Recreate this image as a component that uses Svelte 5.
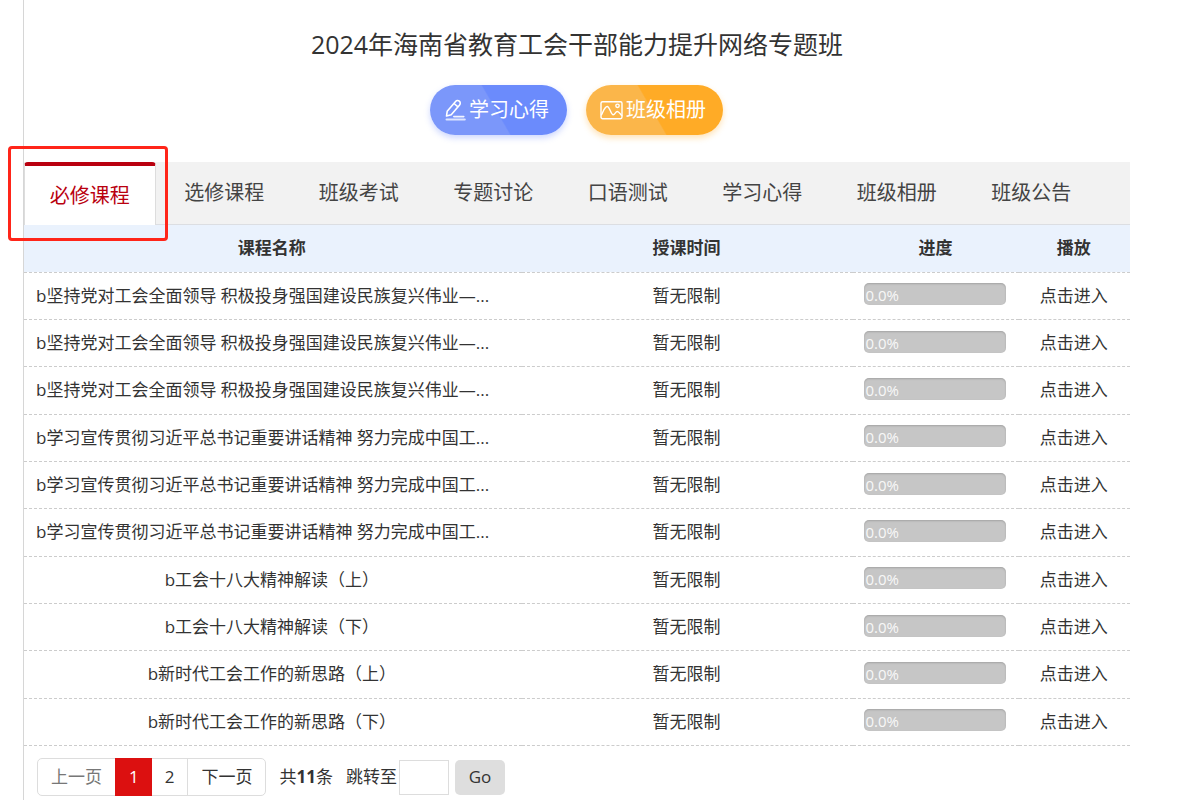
<script>
  const tabs = ['必修课程', '选修课程', '班级考试', '专题讨论', '口语测试', '学习心得', '班级相册', '班级公告'];
  let active = $state(0);
  let jump = $state('');

  const unity = 'b坚持党对工会全面领导 积极投身强国建设民族复兴伟业—...';
  const speech = 'b学习宣传贯彻习近平总书记重要讲话精神 努力完成中国工...';
  const courses = [
    { name: unity, long: true },
    { name: unity, long: true },
    { name: unity, long: true },
    { name: speech, long: true },
    { name: speech, long: true },
    { name: speech, long: true },
    { name: 'b工会十八大精神解读（上）' },
    { name: 'b工会十八大精神解读（下）' },
    { name: 'b新时代工会工作的新思路（上）' },
    { name: 'b新时代工会工作的新思路（下）' }
  ];
</script>

<main class="page">
  <header class="head">
    <h1>2024年海南省教育工会干部能力提升网络专题班</h1>
    <div class="actions">
      <button class="pill blue" type="button">
        <svg width="21" height="22" viewBox="0 0 21 22" fill="none" stroke="#fff" stroke-width="1.6" stroke-linejoin="round" stroke-linecap="round" aria-hidden="true">
          <path d="M1.500 17 2.200 12.300 10.600 2.500a2.600 2.600 0 0 1 3.700-.3 2.600 2.600 0 0 1 .3 3.700L6.200 15.700zM9 4.500l4 3.400" />
          <path d="M8.800 17.600h10" stroke-opacity=".9" />
          <path d="M1.500 20.400h18.300" stroke-width="2" stroke-opacity=".75" />
        </svg>
        <span>学习心得</span>
      </button>
      <button class="pill orange" type="button">
        <svg width="23" height="22" viewBox="0 0 23 22" fill="none" stroke="#fff" stroke-width="1.4" stroke-linejoin="round" stroke-linecap="round" aria-hidden="true">
          <rect x="1" y="2.7" width="21" height="17" rx="1.6" />
          <path d="M1.500 15.800C3.200 12.500 4.800 7.500 7.200 7.500c2.600 0 3.600 8.300 6 8.300 1.800 0 2.300-3.300 4.100-3.300 1.500 0 2.800 2.300 4.500 4.100" />
          <circle cx="17.500" cy="6.800" r="1.700" />
        </svg>
        <span>班级相册</span>
      </button>
    </div>
  </header>

  <div class="tab-wrap">
    <div class="tabs" role="tablist">
      {#each tabs as tab, i}
        <div class="slot">
          <button class="tab" class:active={active === i} type="button" role="tab" aria-selected={active === i} onclick={() => (active = i)}>{tab}</button>
        </div>
      {/each}
    </div>
    <div class="marker"></div>
  </div>

  <table>
    <thead>
      <tr>
        <th class="c-name">课程名称</th>
        <th class="c-time">授课时间</th>
        <th class="c-bar">进度</th>
        <th class="c-play">播放</th>
      </tr>
    </thead>
    <tbody>
      {#each courses as course}
        <tr>
          <td class:long={course.long}>{course.name}</td>
          <td>暂无限制</td>
          <td><div class="bar">0.0%</div></td>
          <td><a href="#play">点击进入</a></td>
        </tr>
      {/each}
    </tbody>
  </table>

  <footer class="foot">
    <nav class="pager">
      <button class="prev" type="button" disabled>上一页</button>
      <button class="current" type="button">1</button>
      <button type="button">2</button>
      <button type="button">下一页</button>
    </nav>
    <span class="total">共<b>11</b>条</span>
    <label for="jump">跳转至</label>
    <input id="jump" type="text" bind:value={jump} />
    <button class="go" type="button">Go</button>
  </footer>
</main>

<style>
  :global(body) {
    background: #fff;
  }
  * {
    box-sizing: border-box;
  }
  .page {
    margin: 0 51px 0 23px;
    border-left: 1px solid #d6d6d6;
    font: 17px/24px "Open Sans", "Noto Sans CJK SC", sans-serif;
    color: #333;
  }
  button,
  input {
    font: inherit;
    color: inherit;
    margin: 0;
  }
  button {
    border: 0;
    background: none;
    padding: 0;
    cursor: pointer;
    white-space: nowrap;
  }
  .head {
    padding-top: 26px;
  }
  h1 {
    margin: 0;
    font-size: 25px;
    line-height: 36px;
    font-weight: 400;
    text-align: center;
  }
  .actions {
    display: flex;
    justify-content: center;
    gap: 19px;
    padding: 23px 1px 27px 0;
  }
  .pill {
    display: flex;
    align-items: center;
    justify-content: center;
    gap: 3px;
    width: 137px;
    height: 50px;
    padding-right: 3px;
    border-radius: 25px;
    color: #fff;
    font-size: 20px;
  }
  .pill svg {
    flex: none;
  }
  .blue {
    background: linear-gradient(60deg, #7b97fa 48%, #6b8bfc 49%);
    box-shadow: 0 3px 6px #6b8bfc55;
  }
  .orange {
    background: linear-gradient(60deg, #fbb64a 48%, #ffab26 49%);
    box-shadow: 0 3px 6px #ffab2655;
  }
  .tab-wrap {
    position: relative;
  }
  .tabs {
    display: flex;
    height: 63px;
    padding-right: 30px;
    background: #f2f2f2;
    border-bottom: 1px solid #dcdee2;
  }
  .slot {
    flex: 1;
    height: 63px;
    padding-right: 3px;
  }
  .tab {
    width: 100%;
    height: 62px;
    font-size: 20px;
    color: #444;
  }
  .tab.active {
    height: 63px;
    background: #fff;
    color: #b9000f;
    border: 1px solid #ddd;
    border-top: 4px solid #b9000f;
    border-bottom: 0;
    border-radius: 4px 4px 0 0;
  }
  .marker {
    position: absolute;
    left: -16px;
    top: -16px;
    width: 160px;
    height: 95px;
    border: 3px solid #ff2519;
    border-radius: 4px;
    pointer-events: none;
  }
  table {
    width: 100%;
    height: 521px;
    table-layout: fixed;
    border-collapse: collapse;
  }
  .c-name {
    width: 45%;
  }
  .c-time {
    width: 30%;
  }
  .c-bar {
    width: 15%;
  }
  .c-play {
    width: 10%;
  }
  thead {
    background: #eaf2fd;
  }
  th {
    height: 47px;
  }
  tr {
    border-bottom: 1px dashed #ccc;
  }
  th,
  td {
    padding: 0 13px 0 11px;
    text-align: center;
    white-space: nowrap;
  }
  .long {
    padding-left: 12px;
    text-align: left;
  }
  a {
    color: inherit;
    text-decoration: none;
  }
  .bar {
    height: 22px;
    margin-bottom: 3px;
    border-radius: 5px;
    background: #c6c6c6;
    box-shadow: inset 0 1px 2px #0000002e;
    color: #f8f8f8;
    font-size: 15px;
    line-height: 24px;
    text-align: left;
    text-indent: 1px;
  }
  .foot {
    display: flex;
    align-items: center;
    padding: 12px 0 4px 13px;
  }
  .pager {
    display: flex;
    height: 38px;
    border: 1px solid #ddd;
    border-radius: 5px;
  }
  .pager button {
    padding: 0 13px;
  }
  .pager button + button {
    border-left: 1px solid #ddd;
  }
  .pager .prev {
    color: #777;
  }
  .pager .current {
    margin: -1px 0;
    background: #dc1010;
    color: #fff;
    border-left-color: #dc1010;
  }
  .pager .current + button {
    border-left: 0;
  }
  .total {
    margin: 0 13px;
  }
  label {
    margin-right: 2px;
  }
  input {
    width: 50px;
    height: 35px;
    padding: 0 6px;
    border: 1px solid #ddd;
    background: #fff;
  }
  .go {
    width: 50px;
    height: 35px;
    margin-left: 6px;
    border-radius: 5px;
    background: #dedede;
  }
</style>
